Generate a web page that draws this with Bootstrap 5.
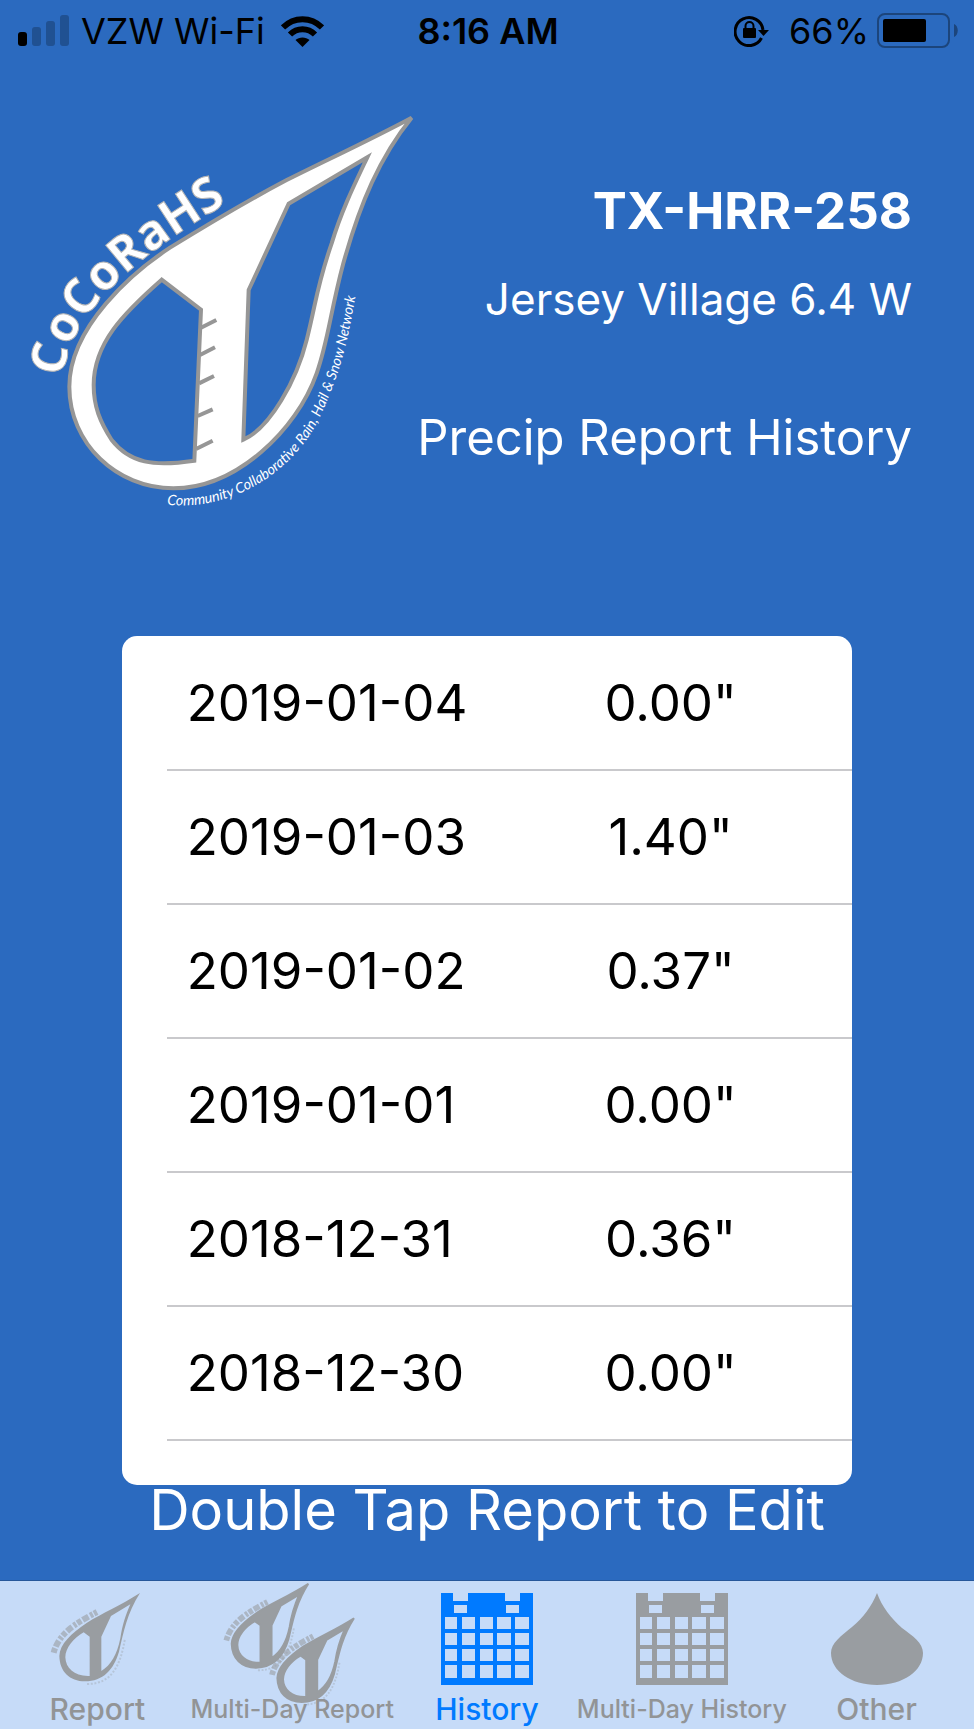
<!DOCTYPE html>
<html lang="en">
<head>
<meta charset="utf-8">
<meta name="viewport" content="width=device-width, initial-scale=1">
<title>CoCoRaHS – Precip Report History</title>
<link href="https://cdn.jsdelivr.net/npm/bootstrap@5.3.0/dist/css/bootstrap.min.css" rel="stylesheet">
<style>
  body { background: #2b6abf; font-family: Inter, "Liberation Sans", sans-serif; color: #000; }
  .status { height: 62px; font-size: 36px; line-height: 40px; padding: 0 16px 0 18px; }
  .status-side { flex: 1 1 0; }
  .brand { width: 395px; flex: none; overflow: visible; }
  .masthead { padding: 38px 62px 0 20px; }
  .station { padding-top: 74px; white-space: nowrap; }
  .station-id { font-size: 51px; line-height: 74px; }
  .station-name { font-size: 44px; line-height: 102px; }
  .page-title { font-size: 49px; line-height: 90px; margin-top: 43px; }
  .report-card { border-radius: 15px; margin-top: 116px; padding: 0 0 44px 45px; }
  .report-table { font-size: 51px; line-height: 60px; }
  .report-table th, .report-table td { height: 134px; border-bottom: 2px solid #c9c9cc; vertical-align: middle; }
  .report-table th { width: 47%; padding-left: 20px; }
  .hint { font-size: 56px; line-height: 50px; padding: 0 16px 40px; }
  .tabs { background: #c6dbf8; border-top: 1px solid #27579a; height: 149px; }
  .tab { flex: 1 1 0; min-width: 0; padding-top: 12px; font-size: 30px; line-height: 36px; font-weight: 500; color: #929496; text-decoration: none; white-space: nowrap; }
  .tab svg { width: 92px; height: 92px; overflow: visible; color: #999da1; margin-bottom: 6px; }
  .tab-long { font-size: 25px; }
  .tab.active, .tab.active svg { color: #007aff; }
</style>
</head>
<body class="d-flex flex-column min-vh-100">

<svg width="0" height="0" class="position-absolute" aria-hidden="true">
  <defs>
    <g id="gauge">
      <path fill="currentColor" fill-rule="evenodd" d="M421 69C360 108 310 128 262 158C215 190 180 222 179 258C180 305 210 334 256 334C310 333 342 300 358 245C372 185 382 130 421 69ZM252 187L270 200V318C225 320 198 295 197 262C197 235 220 205 252 187ZM334 138L392 103C378 135 368 165 362 205C352 255 334 285 305 303V200Z"/>
      <path fill="none" stroke="currentColor" stroke-width="18" stroke-dasharray="14 5 20 6 9 4" opacity=".6" d="M162 248C176 195 219 164 292 126"/>
      <path fill="none" stroke="currentColor" stroke-width="6" stroke-dasharray="6 5" opacity=".35" d="M262 342C335 342 362 290 376 205"/>
    </g>
    <path id="calendar" fill="currentColor" fill-rule="evenodd" d="M0 0H12V8H27V0H64V8H79V0H92V92H0ZM13 12V20H26V12ZM65 12V20H78V12ZM4 24V36H16V24ZM21 24V36H34V24ZM39 24V36H52V24ZM56 24V36H70V24ZM74 24V36H88V24ZM4 40V52H16V40ZM21 40V52H34V40ZM39 40V52H52V40ZM56 40V52H70V40ZM74 40V52H88V40ZM4 56V68H16V56ZM21 56V68H34V56ZM39 56V68H52V56ZM56 56V68H70V56ZM74 56V68H88V56ZM4 72V85H16V72ZM21 72V85H34V72ZM39 72V85H52V72ZM56 72V85H70V72ZM74 72V85H88V72Z"/>
  </defs>
</svg>

<div class="status d-flex align-items-center">
  <div class="status-side d-flex align-items-center">
    <svg width="51" height="32" viewBox="0 0 51 32" aria-label="Signal"><rect y="17" width="9" height="14" rx="3"/><g fill="#205192"><rect x="14" y="12" width="9" height="19" rx="3"/><rect x="28" y="6" width="9" height="25" rx="3"/><rect x="42" width="9" height="31" rx="3"/></g></svg>
    <span class="ms-2 ps-1">VZW Wi-Fi</span>
    <svg class="ms-3" width="43" height="31" viewBox="0 0 43 31" fill="none" stroke="#000" aria-label="Wi-Fi"><path stroke-width="6" d="M2 11.500C13 .5 30 .5 41 11.500M9 18.500C16 11.500 27 11.500 34 18.500"/><path fill="#000" stroke="none" d="M14.500 24C18 20.500 25 20.500 28.500 24L21.500 31Z"/></svg>
  </div>
  <div class="fw-semibold">8:16 AM</div>
  <div class="status-side d-flex align-items-center justify-content-end">
    <svg width="35" height="32" viewBox="0 0 35 32" aria-label="Rotation lock"><path fill="none" stroke="#000" stroke-width="3" d="M27.500 23A14 14 0 1 1 29 15"/><path d="M24 15H35L29.500 21Z"/><rect x="9" y="13" width="13" height="10" rx="1"/><path fill="none" stroke="#000" stroke-width="2" d="M11.500 14V11a4 4 0 0 1 8 0V14"/></svg>
    <span class="ms-3 ps-1">66%</span>
    <svg class="ms-2" width="81" height="36" viewBox="0 0 81 36" aria-label="Battery"><rect x="1" y="1" width="71" height="33" rx="7" fill="none" stroke="#1c457c" stroke-width="2"/><rect x="6" y="6" width="43" height="23" rx="2"/><path fill="#1c457c" d="M77 11C82 13 82 22 77 24Z"/></svg>
  </div>
</div>

<header class="masthead d-flex justify-content-between align-items-start text-white">
  <svg class="brand" viewBox="0 0 1185 1260" role="img" aria-label="CoCoRaHS logo">
    <defs>
      <path id="name-arc" d="M130 832C145 650 320 480 660 287"/>
      <path id="motto-arc" d="M441 1214C640 1235 830 1110 905 940S985 700 1014 550"/>
    </defs>
    <g fill="#fff" stroke="#969696" stroke-width="12">
      <path fill-rule="evenodd" d="M1175 53C1050 120 930 175 800 240C690 298 560 375 450 443C340 515 148 680 148 860C148 1030 290 1165 460 1165C650 1165 830 990 890 820C925 720 930 640 970 490C1020 310 1080 170 1175 53ZM425 539L543 629L523 1082C400 1100 330 1090 275 1020C240 965 221 920 221 855C221 730 310 640 425 539ZM1042 172L806 311L686 570L670 1019C750 985 830 840 860 720C890 600 890 560 935 430C965 330 1005 250 1042 172Z"/>
      <path d="M543 683L589 660M540 765L585 742M537 850L582 828M533 948L578 928M528 1047L578 1022"/>
    </g>
    <text font-family="Open Sans" font-weight="700" font-size="146" fill="#fff" stroke="#b5b5b5" stroke-width="3"><textPath href="#name-arc">CoCoRaHS</textPath></text>
    <text font-family="Lato" font-style="italic" font-size="43" fill="#fff"><textPath href="#motto-arc">Community Collaborative Rain, Hail &amp; Snow Network</textPath></text>
  </svg>
  <div class="station text-end">
    <div class="station-id fw-bold">TX-HRR-258</div>
    <div class="station-name">Jersey Village 6.4 W</div>
    <h1 class="page-title fw-normal mb-0">Precip Report History</h1>
  </div>
</header>

<main class="flex-grow-1 d-flex flex-column">
  <section class="report-card bg-white w-75 mx-auto" aria-label="Reports">
    <table class="report-table w-100">
      <tbody>
        <tr><th scope="row" class="fw-normal">2019-01-04</th><td class="text-center">0.00"</td></tr>
        <tr><th scope="row" class="fw-normal">2019-01-03</th><td class="text-center">1.40"</td></tr>
        <tr><th scope="row" class="fw-normal">2019-01-02</th><td class="text-center">0.37"</td></tr>
        <tr><th scope="row" class="fw-normal">2019-01-01</th><td class="text-center">0.00"</td></tr>
        <tr><th scope="row" class="fw-normal">2018-12-31</th><td class="text-center">0.36"</td></tr>
        <tr><th scope="row" class="fw-normal">2018-12-30</th><td class="text-center">0.00"</td></tr>
      </tbody>
    </table>
  </section>
  <p class="hint text-white text-center mb-0">Double Tap Report to Edit</p>
</main>

<nav class="tabs d-flex text-center" aria-label="Main">
  <a class="tab d-flex flex-column align-items-center" href="#report"><svg viewBox="154 69 276 276" aria-hidden="true"><use href="#gauge"/></svg>Report</a>
  <a class="tab tab-long d-flex flex-column align-items-center" href="#multi-report"><svg viewBox="738 69 276 276" aria-hidden="true"><g stroke="currentColor" stroke-width="6"><use href="#gauge" transform="translate(525 -24) scale(.95)"/><use href="#gauge" transform="translate(662 79) scale(.95)"/></g></svg>Multi-Day Report</a>
  <a class="tab active d-flex flex-column align-items-center" href="#history" aria-current="page"><svg viewBox="0 0 92 92" aria-hidden="true"><use href="#calendar"/></svg>History</a>
  <a class="tab tab-long d-flex flex-column align-items-center" href="#multi-history"><svg viewBox="0 0 92 92" aria-hidden="true"><use href="#calendar"/></svg>Multi-Day History</a>
  <a class="tab d-flex flex-column align-items-center" href="#other"><svg viewBox="0 0 92 92" aria-hidden="true"><path fill="currentColor" d="M46 0C51 14 60 25 71 35C82 43 92 50 92 60C92 78 72 92 46 92S0 78 0 60C0 50 10 43 21 34C32 25 41 13 46 0Z"/></svg>Other</a>
</nav>

<script src="https://cdn.jsdelivr.net/npm/bootstrap@5.3.0/dist/js/bootstrap.bundle.min.js"></script>
</body>
</html>
